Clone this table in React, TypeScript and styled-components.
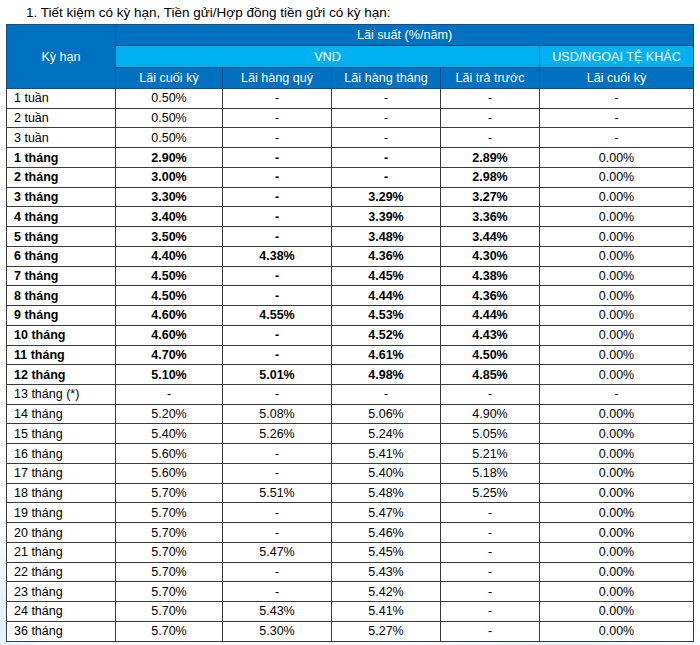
import React from "react";
import styled, { createGlobalStyle } from "styled-components";

const GlobalStyle = createGlobalStyle`
  html, body { margin: 0; padding: 0; }
  body {
    width: 700px;
    height: 645px;
    overflow: hidden;
    background:
      radial-gradient(ellipse 60px 120px at 0px 620px, rgba(200, 228, 246, 0.55), rgba(255,255,255,0) 100%),
      radial-gradient(ellipse 200px 40px at 560px 650px, rgba(210, 232, 248, 0.5), rgba(255,255,255,0) 100%),
      #ffffff;
    font-family: "Liberation Sans", Arial, sans-serif;
    color: #000;
  }
`;

const Page = styled.div`
  display: flex;
  flex-direction: column;
  padding: 5px 0 0 6px;
`;

const Title = styled.div`
  font-size: 13.5px;
  line-height: 16px;
  padding-left: 20px;
  height: 19px;
`;

const Table = styled.table`
  border-collapse: collapse;
  table-layout: fixed;
  width: 687px;
  font-size: 12.5px;
`;

const HeadCell = styled.th<{ $tone: "dark" | "light" }>`
  background: ${(p) => (p.$tone === "dark" ? "#0070c0" : "#00b0f0")};
  color: #ffffff;
  font-weight: 400;
  font-size: 12.6px;
  text-align: center;
  padding: 0;
  border: 1px solid #1c4a7a;
  white-space: nowrap;
`;

const HeadRow = styled.tr<{ $h: number }>`
  height: ${(p) => p.$h}px;
`;

const BodyRow = styled.tr`
  height: 19.74px;
`;

const Cell = styled.td<{ $bold?: boolean; $left?: boolean }>`
  border: 1px solid #3a3a3a;
  padding: 0 ${(p) => (p.$left ? "0 0 7px" : "0")};
  text-align: ${(p) => (p.$left ? "left" : "center")};
  font-weight: ${(p) => (p.$bold ? 700 : 400)};
  line-height: 14px;
  white-space: nowrap;
  background: #ffffff;
`;

type Row = { term: string; v: string[]; bold?: boolean };

const rows: Row[] = [
  { term: "1 tuần", v: ["0.50%", "-", "-", "-", "-"] },
  { term: "2 tuần", v: ["0.50%", "-", "-", "-", "-"] },
  { term: "3 tuần", v: ["0.50%", "-", "-", "-", "-"] },
  { term: "1 tháng", v: ["2.90%", "-", "-", "2.89%", "0.00%"], bold: true },
  { term: "2 tháng", v: ["3.00%", "-", "-", "2.98%", "0.00%"], bold: true },
  { term: "3 tháng", v: ["3.30%", "-", "3.29%", "3.27%", "0.00%"], bold: true },
  { term: "4 tháng", v: ["3.40%", "-", "3.39%", "3.36%", "0.00%"], bold: true },
  { term: "5 tháng", v: ["3.50%", "-", "3.48%", "3.44%", "0.00%"], bold: true },
  { term: "6 tháng", v: ["4.40%", "4.38%", "4.36%", "4.30%", "0.00%"], bold: true },
  { term: "7 tháng", v: ["4.50%", "-", "4.45%", "4.38%", "0.00%"], bold: true },
  { term: "8 tháng", v: ["4.50%", "-", "4.44%", "4.36%", "0.00%"], bold: true },
  { term: "9 tháng", v: ["4.60%", "4.55%", "4.53%", "4.44%", "0.00%"], bold: true },
  { term: "10 tháng", v: ["4.60%", "-", "4.52%", "4.43%", "0.00%"], bold: true },
  { term: "11 tháng", v: ["4.70%", "-", "4.61%", "4.50%", "0.00%"], bold: true },
  { term: "12 tháng", v: ["5.10%", "5.01%", "4.98%", "4.85%", "0.00%"], bold: true },
  { term: "13 tháng (*)", v: ["-", "-", "-", "-", "-"] },
  { term: "14 tháng", v: ["5.20%", "5.08%", "5.06%", "4.90%", "0.00%"] },
  { term: "15 tháng", v: ["5.40%", "5.26%", "5.24%", "5.05%", "0.00%"] },
  { term: "16 tháng", v: ["5.60%", "-", "5.41%", "5.21%", "0.00%"] },
  { term: "17 tháng", v: ["5.60%", "-", "5.40%", "5.18%", "0.00%"] },
  { term: "18 tháng", v: ["5.70%", "5.51%", "5.48%", "5.25%", "0.00%"] },
  { term: "19 tháng", v: ["5.70%", "-", "5.47%", "-", "0.00%"] },
  { term: "20 tháng", v: ["5.70%", "-", "5.46%", "-", "0.00%"] },
  { term: "21 tháng", v: ["5.70%", "5.47%", "5.45%", "-", "0.00%"] },
  { term: "22 tháng", v: ["5.70%", "-", "5.43%", "-", "0.00%"] },
  { term: "23 tháng", v: ["5.70%", "-", "5.42%", "-", "0.00%"] },
  { term: "24 tháng", v: ["5.70%", "5.43%", "5.41%", "-", "0.00%"] },
  { term: "36 tháng", v: ["5.70%", "5.30%", "5.27%", "-", "0.00%"] },
];

const widths = [109, 107, 109, 109, 99, 154];

export default function App() {
  return (
    <>
      <GlobalStyle />
      <Page>
        <Title>1. Tiết kiệm có kỳ hạn, Tiền gửi/Hợp đồng tiền gửi có kỳ hạn:</Title>
        <Table>
          <colgroup>
            {widths.map((w, i) => (
              <col key={i} style={{ width: w }} />
            ))}
          </colgroup>
          <thead>
            <HeadRow $h={21}>
              <HeadCell $tone="dark" rowSpan={3}>
                Kỳ hạn
              </HeadCell>
              <HeadCell $tone="dark" colSpan={5}>
                Lãi suất (%/năm)
              </HeadCell>
            </HeadRow>
            <HeadRow $h={22}>
              <HeadCell $tone="light" colSpan={4}>
                VND
              </HeadCell>
              <HeadCell $tone="light">USD/NGOẠI TỆ KHÁC</HeadCell>
            </HeadRow>
            <HeadRow $h={21}>
              <HeadCell $tone="dark">Lãi cuối kỳ</HeadCell>
              <HeadCell $tone="dark">Lãi hàng quý</HeadCell>
              <HeadCell $tone="dark">Lãi hàng tháng</HeadCell>
              <HeadCell $tone="dark">Lãi trả trước</HeadCell>
              <HeadCell $tone="dark">Lãi cuối kỳ</HeadCell>
            </HeadRow>
          </thead>
          <tbody>
            {rows.map((r) => (
              <BodyRow key={r.term}>
                <Cell $left $bold={r.bold}>
                  {r.term}
                </Cell>
                {r.v.map((val, i) => (
                  <Cell key={i} $bold={r.bold && i < 4}>
                    {val}
                  </Cell>
                ))}
              </BodyRow>
            ))}
          </tbody>
        </Table>
      </Page>
    </>
  );
}
